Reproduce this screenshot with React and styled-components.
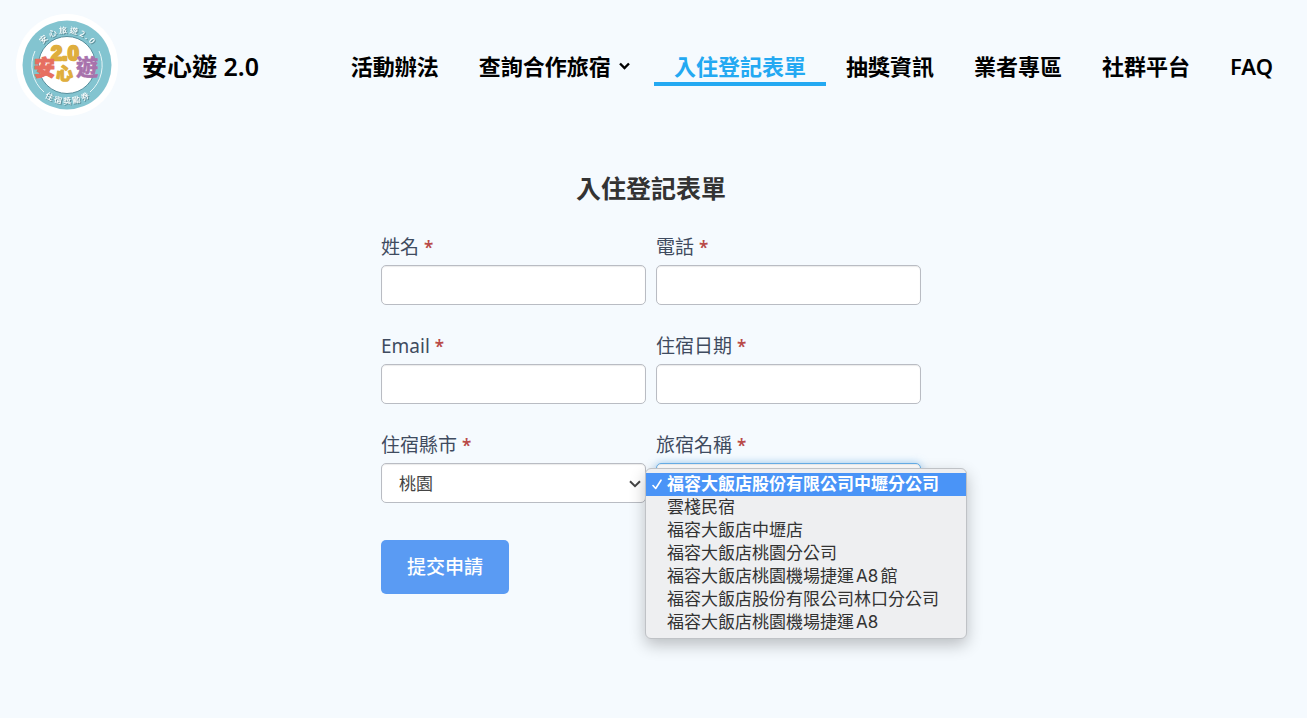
import React from 'react';
import styled, { createGlobalStyle } from 'styled-components';

const GlobalStyle = createGlobalStyle`
  *, *::before, *::after {
    box-sizing: border-box;
  }

  body {
    margin: 0;
    background: #f5fafe;
    color: #333;
    font-family: 'Noto Sans', 'Noto Sans CJK TC', sans-serif;
  }
`

const Header = styled.header`
  display: flex;
  align-items: center;
  justify-content: space-between;
  padding: 14px 14px 14px 16px;
`

const Brand = styled.a`
  display: flex;
  align-items: center;
  gap: 24px;
  color: #000;
  font-size: 25px;
  font-weight: 600;
  line-height: 36px;
  white-space: nowrap;
  text-decoration: none;

  svg {
    display: block;
    flex: none;
  }
`

const BrandName = styled.span`
  padding-top: 2px;
`

const Nav = styled.nav`
  display: flex;
  align-items: center;
`

const NavLink = styled.a`
  display: flex;
  align-items: center;
  gap: 7px;
  padding: 5px 20px 0;
  border-bottom: 4px solid ${props => props.$active ? '#23a9f2' : 'transparent'};
  color: ${props => props.$active ? '#23a9f2' : '#000'};
  font-size: 22px;
  font-weight: 600;
  line-height: 32px;
  white-space: nowrap;
  text-decoration: none;
`

const Main = styled.main`
  display: flex;
  flex-direction: column;
  align-items: center;
  padding: 40px 15px 80px 10px;
`

const Title = styled.h1`
  margin: 0 0 27px;
  font-size: 25px;
  font-weight: 600;
  line-height: 36px;
`

const Form = styled.form`
  display: grid;
  grid-template-columns: 1fr 1fr;
  gap: 27px 10px;
  width: 100%;
  max-width: 540px;
`

const Field = styled.div`
  display: flex;
  flex-direction: column;
  gap: 4px;
`

const Label = styled.label`
  color: #3f4b5f;
  font-size: 19px;
  line-height: 28px;
`

const Required = styled.span`
  color: #b94a48;
  font-size: 17px;
  font-weight: 600;
  line-height: 17px;
`

const Input = styled.input`
  width: 100%;
  height: 40px;
  padding: 0 12px;
  border: 1px solid #b9bcc3;
  border-radius: 5px;
  background: #fff;
  box-shadow: inset 0 1px 1px rgba(0, 0, 0, 0.08);
  font: inherit;
  font-size: 17px;
`

const SelectBox = styled.div`
  position: relative;
`

const Select = styled.select`
  display: block;
  width: 100%;
  height: 40px;
  padding: 0 28px 0 17px;
  border: 1px solid ${props => props.$open ? '#66afe9' : '#b9bcc3'};
  border-radius: 5px;
  background: #fff;
  box-shadow: ${props => props.$open
    ? 'inset 0 1px 1px rgba(0, 0, 0, 0.08), 0 0 8px rgba(102, 175, 233, 0.6)'
    : 'inset 0 1px 1px rgba(0, 0, 0, 0.08)'};
  color: #444;
  font: inherit;
  font-size: 17px;
  appearance: none;
  outline: none;
`

const Arrow = styled.svg`
  position: absolute;
  top: 17px;
  right: 5px;
  pointer-events: none;
`

const Menu = styled.ul`
  position: absolute;
  z-index: 2;
  top: 5px;
  left: -11px;
  width: 322px;
  margin: 0;
  padding: 4px 0;
  border: 1px solid #bfc2c6;
  border-radius: 6px;
  background: #eeeff1;
  box-shadow: 0 6px 16px rgba(0, 0, 0, 0.24);
  list-style: none;
`

const Option = styled.li`
  display: flex;
  align-items: center;
  height: 23px;
  background: ${props => props.$selected ? '#4a94f7' : 'transparent'};
  color: ${props => props.$selected ? '#fff' : '#333'};
  font-family: Inter, 'Noto Sans CJK TC', sans-serif;
  font-size: 17px;
  font-weight: ${props => props.$selected ? 600 : 400};
  line-height: 23px;
  text-autospace: normal;
  white-space: nowrap;
`

const Tick = styled.span`
  display: flex;
  flex: none;
  justify-content: center;
  width: 21px;
`

const Submit = styled.button`
  justify-self: start;
  height: 54px;
  margin-top: 10px;
  padding: 0 26px;
  border: 0;
  border-radius: 5px;
  background: #5a9bf3;
  color: #fff;
  font: inherit;
  font-size: 19px;
  font-weight: 500;
  line-height: 28px;
`

const ArcText = styled.text`
  fill: #fff;
  font-size: 8px;
  font-weight: 500;
  letter-spacing: 2px;
  text-anchor: middle;
  filter: drop-shadow(1px 1px 0 #5b8a94);
`

const links = [
    { text: '活動辦法' },
    { text: '查詢合作旅宿', dropdown: true },
    { text: '入住登記表單', active: true },
    { text: '抽獎資訊' },
    { text: '業者專區' },
    { text: '社群平台' },
    { text: 'FAQ' },
]

const hotels = [
    '福容大飯店股份有限公司中壢分公司',
    '雲棧民宿',
    '福容大飯店中壢店',
    '福容大飯店桃園分公司',
    '福容大飯店桃園機場捷運A8館',
    '福容大飯店股份有限公司林口分公司',
    '福容大飯店桃園機場捷運A8',
]

const Logo = () => (
    <svg width="102" height="102" viewBox="0 0 102 102" fontFamily="'Noto Sans CJK TC', sans-serif" aria-hidden="true">
        <defs>
            <path id="arcTop" d="M19 51a32 32 0 0 1 64 0" />
            <path id="arcBottom" d="M12 51a39 39 0 0 0 78 0" />
        </defs>
        <circle cx="51" cy="51" r="51" fill="#fff" />
        <circle cx="51" cy="51" r="44.5" fill="#83c4d0" />
        <circle cx="51" cy="51" r="28.5" fill="#fff" stroke="#568f9d" strokeWidth="1" />
        <path d="M19 37a35 35 0 0 0 9 41M83 37a35 35 0 0 1-9 41" fill="none" stroke="#e6f5f7" strokeWidth="1" />
        <ArcText><textPath href="#arcTop" startOffset="51%">安心旅遊2.0</textPath></ArcText>
        <ArcText><textPath href="#arcBottom" startOffset="51%">住宿獎勵券</textPath></ArcText>
        <g fontWeight="900" strokeLinejoin="round">
            <text x="35" y="46" fontFamily="'Liberation Sans', sans-serif" fontSize="20" fill="#dfae3d" stroke="#dfae3d" strokeWidth="2.4">2.0</text>
            <text x="18" y="61" fontSize="21" fill="#e66f61" stroke="#e66f61" strokeWidth="1">安</text>
            <text x="40" y="66" fontSize="17" fill="#dfae3d" stroke="#dfae3d" strokeWidth="1">心</text>
            <text x="60" y="61" fontSize="22" fill="#a872ac" stroke="#a872ac" strokeWidth="0.5">遊</text>
        </g>
    </svg>
)

const TextField = ({ id, label, type = 'text' }) => (
    <Field>
        <Label htmlFor={id}>{label} <Required>*</Required></Label>
        <Input id={id} name={id} type={type} />
    </Field>
)

const SelectArrow = () => (
    <Arrow width="12" height="8" viewBox="0 0 12 8" fill="none" stroke="#444" strokeWidth="2" aria-hidden="true">
        <path d="M1 1.2l5 5 5-5" />
    </Arrow>
)

const App = () => {

    return (
        <>
            <GlobalStyle />
            <Header>
                <Brand href="#">
                    <Logo />
                    <BrandName>安心遊 2.0</BrandName>
                </Brand>
                <Nav>
                    {links.map(link => (
                        <NavLink key={link.text} href="#" $active={link.active}>
                            {link.text}
                            {link.dropdown && (
                                <svg width="16" height="8" viewBox="0 0 16 8" fill="none" stroke="#000" strokeWidth="2.4" aria-hidden="true">
                                    <path d="M2 1.5l4.5 4.5L11 1.5" />
                                </svg>
                            )}
                        </NavLink>
                    ))}
                </Nav>
            </Header>
            <Main>
                <Title>入住登記表單</Title>
                <Form>
                    <TextField id="name" label="姓名" />
                    <TextField id="phone" label="電話" type="tel" />
                    <TextField id="email" label="Email" type="email" />
                    <TextField id="date" label="住宿日期" />
                    <Field>
                        <Label htmlFor="city">住宿縣市 <Required>*</Required></Label>
                        <SelectBox>
                            <Select id="city" name="city" defaultValue="桃園">
                                <option>桃園</option>
                            </Select>
                            <SelectArrow />
                        </SelectBox>
                    </Field>
                    <Field>
                        <Label htmlFor="hotel">旅宿名稱 <Required>*</Required></Label>
                        <SelectBox>
                            <Select id="hotel" name="hotel" defaultValue={hotels[0]} $open>
                                {hotels.map(hotel => <option key={hotel}>{hotel}</option>)}
                            </Select>
                            <Menu role="listbox" aria-label="旅宿名稱">
                                {hotels.map((hotel, i) => (
                                    <Option key={hotel} role="option" aria-selected={i === 0} $selected={i === 0}>
                                        <Tick>
                                            {i === 0 && (
                                                <svg width="10" height="11" viewBox="0 0 10 11" fill="none" stroke="#fff" strokeWidth="1.6" strokeLinecap="round" strokeLinejoin="round">
                                                    <path d="M1 6.5L3.7 9.5 9 1.2" />
                                                </svg>
                                            )}
                                        </Tick>
                                        {hotel}
                                    </Option>
                                ))}
                            </Menu>
                        </SelectBox>
                    </Field>
                    <Submit type="button">提交申請</Submit>
                </Form>
            </Main>
        </>
    );
};

export default App;
